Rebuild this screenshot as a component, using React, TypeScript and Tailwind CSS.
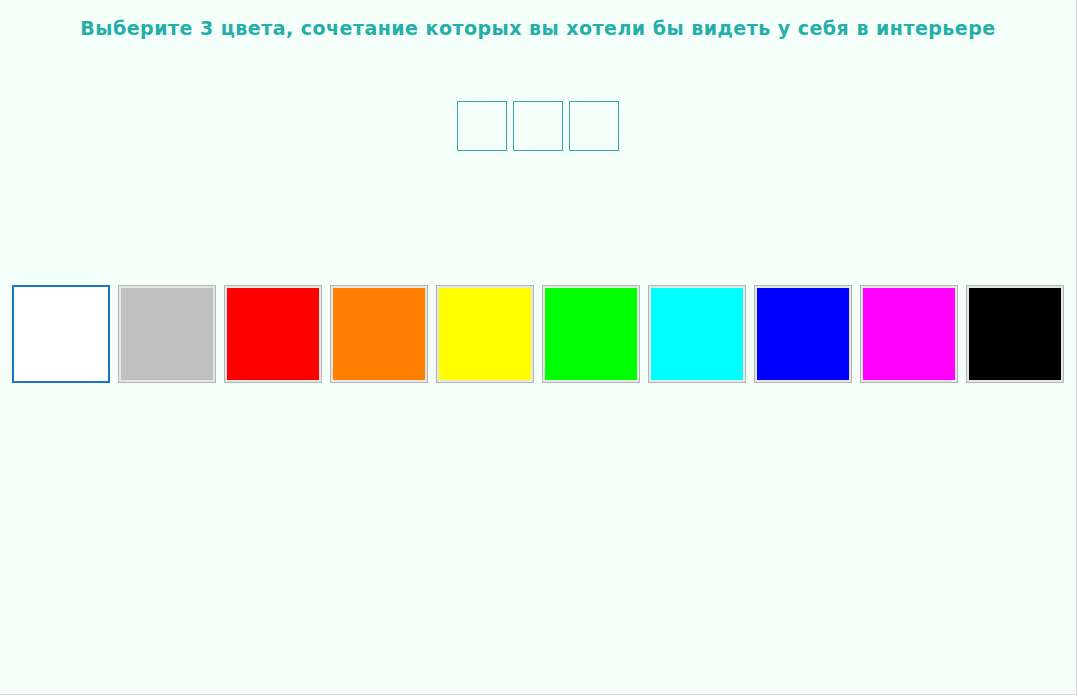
const colors = [
  "#ffffff",
  "#c0c0c0",
  "#ff0000",
  "#ff8000",
  "#ffff00",
  "#00ff00",
  "#00ffff",
  "#0000ff",
  "#ff00ff",
  "#000000",
];

export default function App() {
  return (
    <div className="h-[696px] w-[1078px] bg-white">
      <div className="flex h-[695px] w-[1077px] flex-col items-center border-r border-b border-[#d6d6d6] bg-[#f4fff9]">
        <h1
          className="mt-[14px] text-[19px] font-bold tracking-[0.48px] text-[#26aea9]"
          style={{ fontFamily: '"DejaVu Sans", sans-serif' }}
        >
          Выберите 3 цвета, сочетание которых вы хотели бы видеть у себя в интерьере
        </h1>

        <div className="mt-[58px] flex gap-[6px]">
          {[0, 1, 2].map((i) => (
            <div key={i} className="h-[50px] w-[50px] border border-[#3ea5ad]" />
          ))}
        </div>

        <div className="mt-[134px] flex gap-[8px]">
          {colors.map((c, i) =>
            i === 0 ? (
              <div
                key={c}
                className="h-[98px] w-[98px] border-2 border-[#1976c9] bg-white"
              />
            ) : (
              <div
                key={c}
                className="h-[98px] w-[98px] border border-[#b4b4b4] bg-[#e6e6e6] p-[2px]"
              >
                <div className="h-full w-full" style={{ background: c }} />
              </div>
            )
          )}
        </div>
      </div>
    </div>
  );
}
